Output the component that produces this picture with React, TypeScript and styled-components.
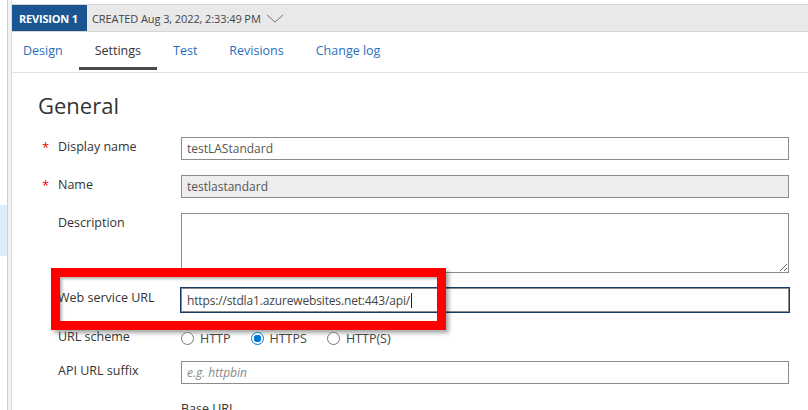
import styled, { createGlobalStyle } from 'styled-components'

const GlobalStyle = createGlobalStyle`
  * { box-sizing: border-box; }
  html, body { margin: 0; padding: 0; background: #fff; }
  body {
    font-family: "Open Sans", "Noto Sans", sans-serif;
    color: #333;
    overflow: hidden;
  }
`

const tabs = ['Design', 'Settings', 'Test', 'Revisions', 'Change log']

export default function App() {
  return (
    <>
      <GlobalStyle />
      <Page>
        <Sidebar>
          <SideItem />
        </Sidebar>
        <Splitter />
        <Panel>
          <RevisionBar>
            <RevisionBadge>REVISION 1</RevisionBadge>
            <Created>CREATED Aug 3, 2022, 2:33:49 PM</Created>
            <svg width="18" height="9" viewBox="0 0 18 9">
              <polyline points="1,1 9,8 17,1" fill="none" stroke="#777" strokeWidth="1" />
            </svg>
          </RevisionBar>
          <TabBar>
            {tabs.map((t) => (
              <Tab key={t} $active={t === 'Settings'}>
                {t}
              </Tab>
            ))}
          </TabBar>
          <Content>
            <Heading>General</Heading>
            <Form>
              <Row>
                <Star>*</Star>
                <Label>Display name</Label>
                <TextInput value="testLAStandard" readOnly />
              </Row>
              <Row>
                <Star>*</Star>
                <Label>Name</Label>
                <TextInput value="testlastandard" readOnly $disabled />
              </Row>
              <Row>
                <Star />
                <Label>Description</Label>
                <TextArea readOnly />
              </Row>
              <Row>
                <Star />
                <Label>Web service URL</Label>
                <FocusedInput>
                  https://stdla1.azurewebsites.net:443/api/
                  <Caret />
                </FocusedInput>
                <Highlight />
              </Row>
              <Row>
                <Star />
                <Label>URL scheme</Label>
                <RadioGroup>
                  <RadioOption>
                    <RadioDot />
                    HTTP
                  </RadioOption>
                  <RadioOption>
                    <RadioDot $checked />
                    HTTPS
                  </RadioOption>
                  <RadioOption>
                    <RadioDot />
                    HTTP(S)
                  </RadioOption>
                </RadioGroup>
              </Row>
              <Row>
                <Star />
                <Label>API URL suffix</Label>
                <TextInput placeholder="e.g. httpbin" readOnly />
              </Row>
              <Row>
                <Star />
                <Label />
                <SubLabel>Base URL</SubLabel>
              </Row>
            </Form>
          </Content>
        </Panel>
      </Page>
    </>
  )
}

const Page = styled.div`
  display: flex;
  width: 808px;
  height: 410px;
  overflow: hidden;
`
const Sidebar = styled.div`
  width: 8px;
  flex-shrink: 0;
  display: flex;
  flex-direction: column;
  padding-top: 205px;
  border-right: 1px solid #cfcfcf;
`
const SideItem = styled.div`
  height: 51px;
  flex-shrink: 0;
  background: #deecf9;
`
const Splitter = styled.div`
  width: 4px;
  flex-shrink: 0;
  background: #f3f3f3;
  border-right: 1px solid #d9d9d9;
`
const Panel = styled.div`
  flex: 1;
  display: flex;
  flex-direction: column;
  padding-top: 4px;
  min-width: 0;
`
const RevisionBar = styled.div`
  height: 28px;
  flex-shrink: 0;
  display: flex;
  align-items: center;
  background: #e9e9e9;
  border-top: 1px solid #d4d4d4;
  border-bottom: 1px solid #d4d4d4;
  font-size: 11px;

  svg {
    margin-left: 5px;
    margin-top: 1px;
  }
`
const RevisionBadge = styled.div`
  align-self: stretch;
  display: flex;
  align-items: center;
  padding: 0 7px;
  width: 75px;
  background: #1b5591;
  color: #fff;
  font-weight: 700;
  font-size: 11px;
  letter-spacing: -0.2px;
`
const Created = styled.span`
  margin-left: 5px;
  color: #444;
  letter-spacing: -0.1px;
`
const TabBar = styled.div`
  height: 41px;
  flex-shrink: 0;
  display: flex;
  align-items: flex-start;
  padding-left: 11px;
  border-bottom: 1px solid #e1e1e1;
`
const Tab = styled.div<{ $active?: boolean }>`
  height: 38px;
  padding: 10px 16px 0;
  font-size: 12.5px;
  color: ${(p) => (p.$active ? '#333' : '#1f6fc0')};
  border-bottom: 3px solid ${(p) => (p.$active ? '#4a4a4a' : 'transparent')};

  &:first-child {
    padding-left: 0;
  }
`
const Content = styled.div`
  padding: 17px 19px 0 26px;
`
const Heading = styled.h1`
  margin: 0 0 17px;
  font-size: 22px;
  font-weight: 400;
  line-height: 30px;
  color: #333;
`
const Form = styled.div`
  display: flex;
  flex-direction: column;
  gap: 15px;
`
const Row = styled.div`
  position: relative;
  display: grid;
  grid-template-columns: 16px 123px 1fr;
  align-items: start;
  padding-left: 4px;
`
const Star = styled.span`
  color: #e00;
  font-size: 13px;
  line-height: 20px;
`
const Label = styled.span`
  font-size: 12.5px;
  line-height: 19px;
  color: #333;
`
const TextInput = styled.input<{ $disabled?: boolean }>`
  height: 23px;
  width: 100%;
  padding: 0 5px;
  font-family: inherit;
  font-size: 12px;
  color: #555;
  border: 1px solid #8c8c8c;
  border-radius: 0;
  background: ${(p) => (p.$disabled ? '#ededed' : '#fff')};
  outline: none;

  &::placeholder {
    color: #888;
    font-style: italic;
  }
`
const TextArea = styled.textarea`
  height: 60px;
  width: 100%;
  font-family: inherit;
  border: 1px solid #8c8c8c;
  border-radius: 0;
  resize: vertical;
  outline: none;
`
const FocusedInput = styled.div`
  height: 24px;
  display: flex;
  align-items: center;
  padding: 0 5px;
  font-size: 12px;
  letter-spacing: -0.15px;
  color: #444;
  border: 1px solid #8c8c8c;
  box-shadow: 0 0 0 1px #173c63;
`
const Caret = styled.span`
  width: 1px;
  height: 15px;
  margin-left: 1px;
  background: #222;
`
const Highlight = styled.div`
  position: absolute;
  left: 13px;
  top: -20px;
  width: 395px;
  height: 62px;
  border: 9px solid #ff0000;
  box-shadow: 3px 3px 4px rgba(0, 0, 0, 0.35), inset 2px 2px 3px rgba(0, 0, 0, 0.3);
  pointer-events: none;
`
const RadioGroup = styled.div`
  display: flex;
  align-items: center;
  gap: 20px;
  height: 19px;
  padding-top: 3px;
`
const RadioOption = styled.label`
  display: flex;
  align-items: center;
  gap: 6px;
  font-size: 12.5px;
  color: #444;
`
const RadioDot = styled.span<{ $checked?: boolean }>`
  width: 13px;
  height: 13px;
  border-radius: 50%;
  border: 1px solid ${(p) => (p.$checked ? '#0078d4' : '#777')};
  background: ${(p) =>
    p.$checked ? 'radial-gradient(circle, #0078d4 0 3.5px, #fff 4px)' : '#fff'};
`
const SubLabel = styled.span`
  font-size: 12.5px;
  line-height: 19px;
  color: #333;
`
